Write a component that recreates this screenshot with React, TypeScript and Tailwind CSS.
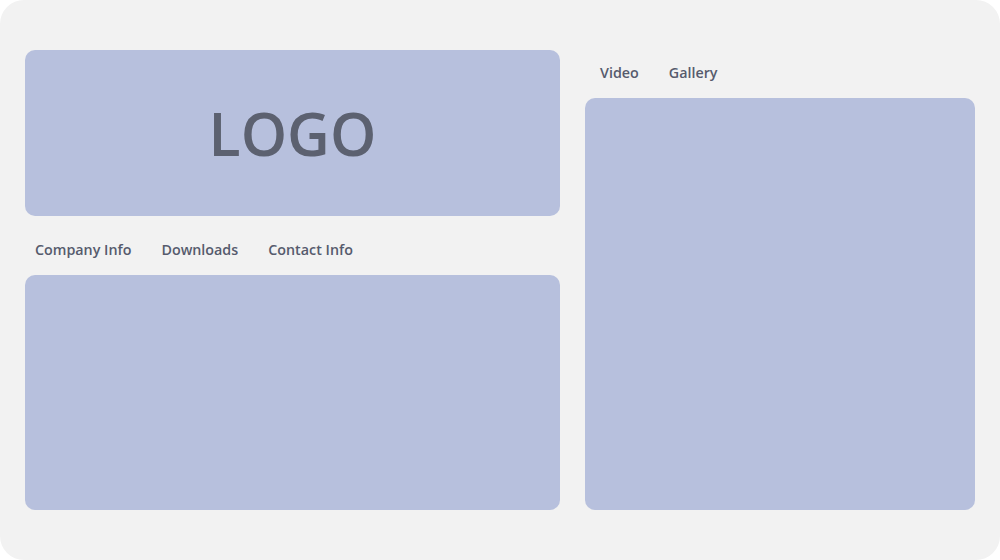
import React from "react";

export default function App() {
  const font = { fontFamily: '"Open Sans", "Noto Sans", sans-serif' };
  return (
    <div className="w-[1000px] h-[560px] bg-white" style={font}>
      <div className="w-[1000px] h-[560px] bg-[#f2f2f2] rounded-[24px] flex gap-[25px] px-[25px] pt-[50px] pb-[50px]">
        <div className="w-[535px] flex flex-col">
          <div className="h-[166px] rounded-[10px] bg-[#b7c0dd] flex items-center justify-center">
            <span className="text-[59px] font-semibold text-[#5c6170] leading-none">LOGO</span>
          </div>
          <div className="h-[59px] flex items-center gap-[30px] pl-[10px] pt-[9px] text-[14.3px] font-semibold text-[#565b6d]">
            <span>Company Info</span>
            <span>Downloads</span>
            <span>Contact Info</span>
          </div>
          <div className="flex-1 rounded-[10px] bg-[#b7c0dd]" />
        </div>
        <div className="w-[390px] flex flex-col">
          <div className="h-[48px] flex items-center gap-[30px] pl-[15px] pb-[2px] text-[14.3px] font-semibold text-[#565b6d]">
            <span>Video</span>
            <span>Gallery</span>
          </div>
          <div className="flex-1 rounded-[10px] bg-[#b7c0dd]" />
        </div>
      </div>
    </div>
  );
}
